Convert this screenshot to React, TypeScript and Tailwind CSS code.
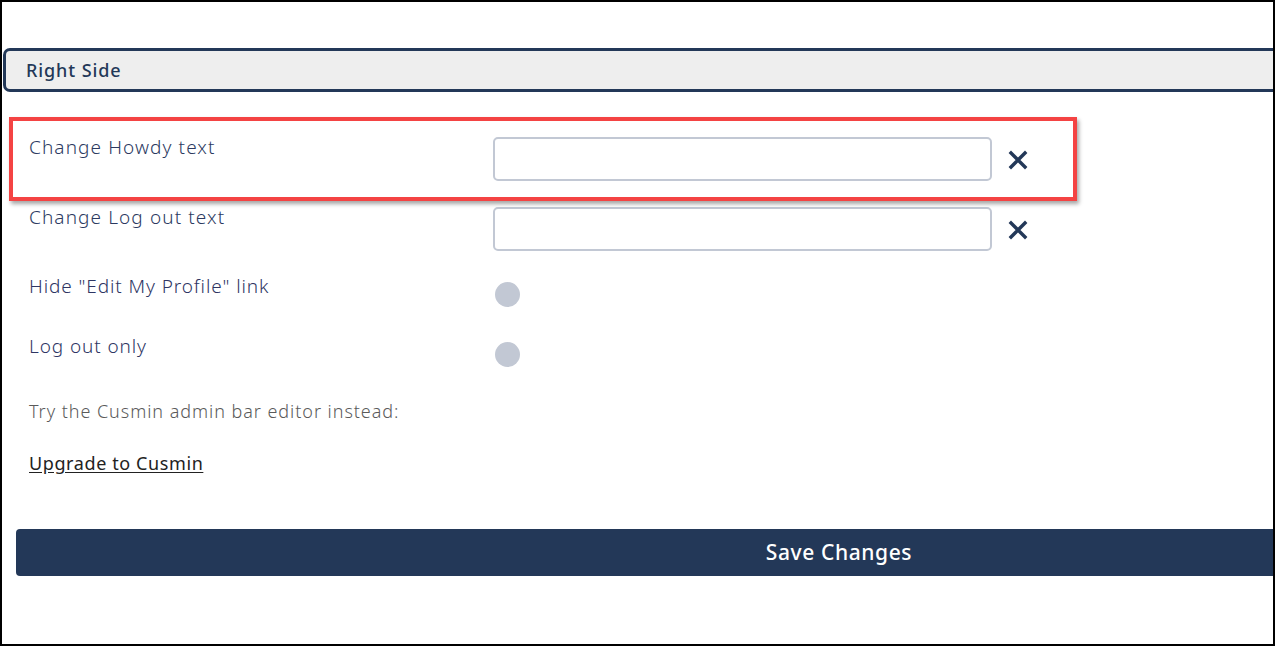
import React from 'react';

function ClearIcon() {
  return (
    <svg width="20" height="20" viewBox="0 0 20 20" className="shrink-0">
      <path d="M3 3 L17 17 M17 3 L3 17" stroke="#233858" strokeWidth="3.4" strokeLinecap="square" />
    </svg>
  );
}

function TextRow({ label }: { label: string }) {
  return (
    <div className="flex items-start h-[70px]">
      <label className="w-[464px] shrink-0 -mt-[1px] text-[19px] font-light leading-[22px] tracking-[1.1px] text-[#2c3a5f]">
        {label}
      </label>
      <input
        type="text"
        className="w-[499px] h-[44px] shrink-0 rounded-[5px] border-2 border-[#c2c8d4] bg-white outline-none"
      />
      <div className="ml-[16px] mt-[13px]">
        <ClearIcon />
      </div>
    </div>
  );
}

function ToggleRow({ label }: { label: string }) {
  return (
    <div className="flex items-start h-[60px]">
      <label className="w-[466px] shrink-0 -mt-[2px] text-[19px] font-light leading-[22px] tracking-[0.9px] text-[#2e3563]">
        {label}
      </label>
      <span className="mt-[5px] block w-[25px] h-[25px] rounded-full bg-[#c2c8d4]" />
    </div>
  );
}

export default function App() {
  return (
    <div
      className="relative w-[1275px] h-[646px] overflow-hidden border-2 border-black bg-white"
      style={{ fontFamily: '"Noto Sans", "Lato", sans-serif' }}
    >
      <div className="w-[1680px] pt-[46px]">
        <div className="ml-[1px] h-[44px] flex items-center rounded-l-[7px] border-[3px] border-[#233858] bg-[#eeeeee] pl-[20px]">
          <span className="text-[18px] font-medium tracking-[0.9px] text-[#233858]">
            Right Side
          </span>
        </div>

        <div className="pl-[27px] pt-[45px]">
          <TextRow label="Change Howdy text" />
          <TextRow label="Change Log out text" />
          <ToggleRow label={'Hide "Edit My Profile" link'} />
          <ToggleRow label="Log out only" />

          <p className="mt-[4px] text-[18px] font-light leading-[20px] tracking-[0.95px] text-[#5a5a5a]">
            Try the Cusmin admin bar editor instead:
          </p>
          <a href="#" className="mt-[32px] inline-block text-[18px] leading-[20px] tracking-[0.6px] text-[#222222] underline underline-offset-2">
            Upgrade to Cusmin
          </a>
        </div>

        <button className="ml-[14px] mt-[53px] h-[47px] w-[1646px] rounded-l-[4px] bg-[#233858] text-[21px] font-medium tracking-[0.6px] text-white">
          Save Changes
        </button>
      </div>

      <div className="pointer-events-none absolute left-[7px] top-[115px] w-[1068px] h-[84px] border-[4px] border-[#f44343] shadow-[2px_3px_4px_rgba(0,0,0,0.35)]" />
    </div>
  );
}
